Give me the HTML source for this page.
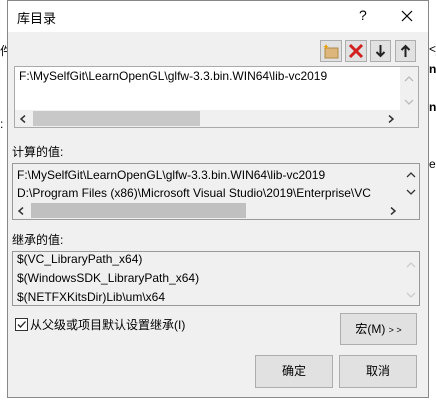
<!DOCTYPE html><html><head><style>
*{margin:0;padding:0;box-sizing:border-box}
body{width:436px;height:405px;background:#fff;position:relative;overflow:hidden;font:12px "Liberation Sans","Noto Sans CJK SC",sans-serif;color:#000}
.a{position:absolute}
.dlg{left:7px;top:0;width:422px;height:398px;border:1px solid #888;background:#f0f0f0}
.title{left:0;top:0;width:420px;height:31px;background:#fff}
.box{position:absolute;border:1px solid #aaa;background:#fff;overflow:hidden;white-space:nowrap}
.gray{background:#f0f0f0;border-color:#999}
.btn{position:absolute;background:#e1e1e1;border:1px solid #adadad;text-align:center}
.tb{position:absolute;top:40px;width:22px;height:22px;background:#e1e1e1;border:1px solid #adadad}
.vs{position:absolute;right:0;top:0;width:17px;bottom:17px;background:#f0f0f0}
.hs{position:absolute;left:0;right:0;bottom:0;height:17px;background:#f0f0f0}
.th{position:absolute;top:1px;height:15px;background:#c8c8c8}
</style></head><body>
<div class="a" style="left:0;top:42px;font-size:12px;color:#000">件</div>
<div class="a" style="left:0;top:117px">:</div>
<div class="a" style="left:429px;top:42px">&lt;_</div>
<div class="a" style="left:429px;top:62px;font-weight:bold">n</div>
<div class="a" style="left:429px;top:100px;font-weight:bold">n</div>
<div class="a" style="left:429px;top:157px">e</div>
<div class="a dlg">
 <div class="a title"></div>
 <div class="a" style="left:9px;top:7px;font-size:13px">库目录</div>
 <div class="a" style="left:351px;top:6px;font-size:14px">?</div>
 <svg class="a" style="left:393px;top:9px" width="12" height="12"><path d="M1 1L11 11M11 1L1 11" stroke="#000" stroke-width="1.2"/></svg>
</div>
<div class="tb" style="left:320px"><svg width="20" height="20"><rect x="4" y="7" width="13" height="10" fill="#dcb67a" stroke="#b08a4a"/><path d="M5 3l1 2 2 0-2 1 1 2-2-1-2 1 1-2-2-1 2 0z" fill="#e8a000"/></svg></div>
<div class="tb" style="left:345px"><svg width="20" height="20"><path d="M4 4L16 16M16 4L4 16" stroke="#d02020" stroke-width="3"/></svg></div>
<div class="tb" style="left:370px;width:21px"><svg width="19" height="20"><path d="M9.5 4V15M5.5 11l4 4 4-4" stroke="#222" stroke-width="2" fill="none"/></svg></div>
<div class="tb" style="left:395px;width:21px"><svg width="19" height="20"><path d="M9.5 16V5M5.5 9l4-4 4 4" stroke="#222" stroke-width="2" fill="none"/></svg></div>
<div class="box" style="left:14px;top:66px;width:405px;height:62px">
 <div class="a" style="left:4px;top:2px">F:\MySelfGit\LearnOpenGL\glfw-3.3.bin.WIN64\lib-vc2019</div>
 <div class="vs" style="width:18px;bottom:0">
  <svg class="a" style="left:4px;top:9px" width="10" height="6"><path d="M1 5l4-4 4 4" stroke="#bbb" fill="none" stroke-width="1.3"/></svg>
  <svg class="a" style="left:4px;top:32px" width="10" height="6"><path d="M1 1l4 4 4-4" stroke="#bbb" fill="none" stroke-width="1.3"/></svg>
 </div>
 <div class="hs" style="right:18px"><div class="th" style="left:18px;width:167px"></div>
  <svg class="a" style="left:5px;top:5px" width="6" height="8"><path d="M5 0.5L1 4l4 3.5" stroke="#333" fill="none" stroke-width="1.5"/></svg>
  <svg class="a" style="right:6px;top:5px" width="6" height="8"><path d="M1 0.5L5 4l-4 3.5" stroke="#333" fill="none" stroke-width="1.5"/></svg>
 </div>
</div>
<div class="a" style="left:12px;top:143px">计算的值:</div>
<div class="box gray" style="left:12px;top:163px;width:408px;height:57px">
 <div class="a" style="left:4px;top:2px;line-height:18px">F:\MySelfGit\LearnOpenGL\glfw-3.3.bin.WIN64\lib-vc2019<br>D:\Program Files (x86)\Microsoft Visual Studio\2019\Enterprise\VC</div>
 <div class="vs">
  <svg class="a" style="left:4px;top:8px" width="10" height="6"><path d="M1 5l4-4 4 4" stroke="#333" fill="none" stroke-width="1.3"/></svg>
  <svg class="a" style="left:4px;top:25px" width="10" height="6"><path d="M1 1l4 4 4-4" stroke="#333" fill="none" stroke-width="1.3"/></svg>
 </div>
 <div class="hs"><div class="th" style="left:18px;width:215px;background:#c0c0c0"></div>
  <svg class="a" style="left:5px;top:5px" width="6" height="8"><path d="M5 0.5L1 4l4 3.5" stroke="#333" fill="none" stroke-width="1.5"/></svg>
  <svg class="a" style="right:23px;top:5px" width="6" height="8"><path d="M1 0.5L5 4l-4 3.5" stroke="#333" fill="none" stroke-width="1.5"/></svg>
 </div>
</div>
<div class="a" style="left:12px;top:231px">继承的值:</div>
<div class="box gray" style="left:12px;top:251px;width:408px;height:55px">
 <div class="a" style="left:4px;top:-2px;line-height:19px">$(VC_LibraryPath_x64)<br>$(WindowsSDK_LibraryPath_x64)<br>$(NETFXKitsDir)Lib\um\x64</div>
 <div class="vs" style="bottom:0">
  <svg class="a" style="left:4px;top:10px" width="10" height="6"><path d="M1 5l4-4 4 4" stroke="#ccc" fill="none" stroke-width="1.3"/></svg>
  <svg class="a" style="left:4px;top:40px" width="10" height="6"><path d="M1 1l4 4 4-4" stroke="#ccc" fill="none" stroke-width="1.3"/></svg>
 </div>
</div>
<div class="a" style="left:15px;top:318px;width:13px;height:13px;border:1px solid #333;background:#fff"><svg width="11" height="11" style="display:block"><path d="M2 5.5l2.5 2.5 5-5.5" stroke="#222" stroke-width="1.3" fill="none"/></svg></div>
<div class="a" style="left:30px;top:316px">从父级或项目默认设置继承(I)</div>
<div class="btn" style="left:340px;top:313px;width:77px;height:32px;line-height:30px">宏(M) <span style="font-size:9px">&gt; &gt;</span></div>
<div class="btn" style="left:255px;top:355px;width:78px;height:33px;line-height:31px">确定</div>
<div class="btn" style="left:339px;top:355px;width:78px;height:33px;line-height:31px">取消</div>
</body></html>
